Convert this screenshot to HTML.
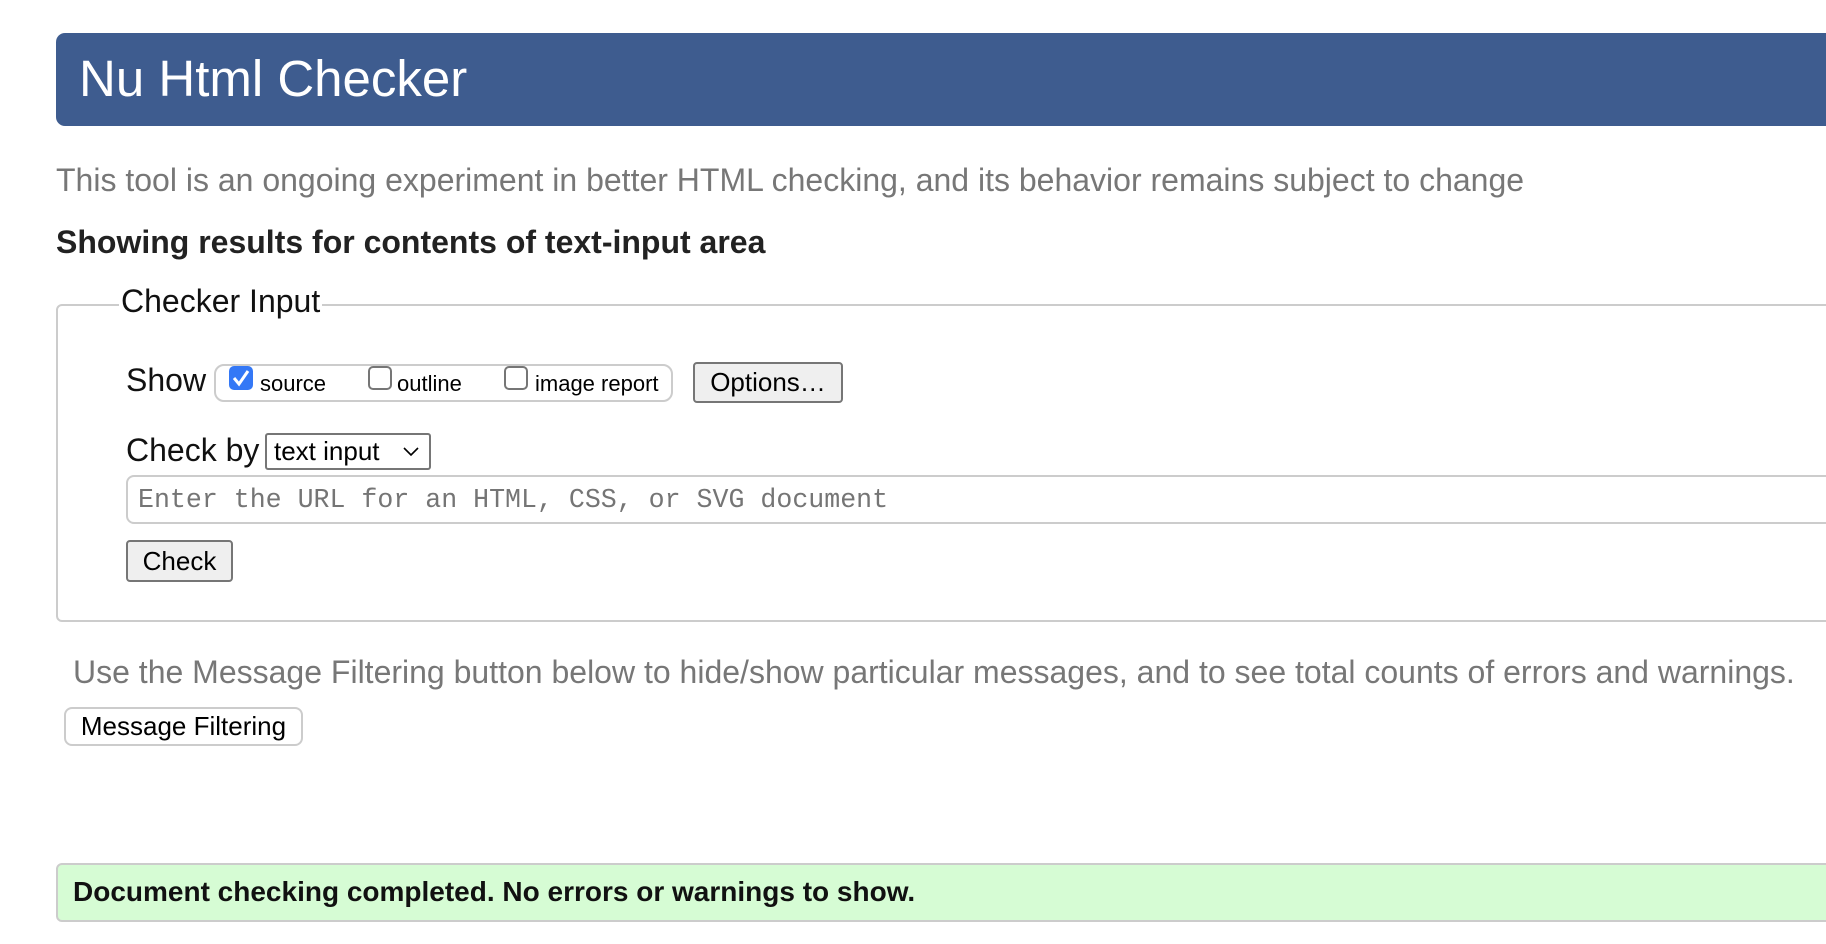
<!DOCTYPE html>
<html><head><meta charset="utf-8"><style>
body{margin:0;width:1826px;height:944px;overflow:hidden;background:#fff;font-family:"Liberation Sans",Arial,sans-serif;position:relative}
.a{position:absolute;white-space:nowrap}
#hdr{left:56px;top:33px;width:1800px;height:93px;background:#3e5c8f;border-radius:9px 0 0 9px}
#hdr span{position:absolute;left:23px;top:17px;color:#fff;font-size:51px;line-height:58px}
.gray{color:#777}
.box{border:2px solid #ccc;box-sizing:border-box}
.btn{background:#efefef;border:2px solid #767676;border-radius:4px;box-sizing:border-box;font-size:26px;color:#000;text-align:center}
.cb{display:inline-block;width:24px;height:24px;border:2px solid #767676;border-radius:5px;box-sizing:border-box;vertical-align:top}
</style></head><body>
<div class="a" id="hdr"><span>Nu Html Checker</span></div>
<div class="a gray" style="left:56px;top:162px;font-size:32px">This tool is an ongoing experiment in better HTML checking, and its behavior remains subject to change</div>
<div class="a" style="left:56px;top:224px;font-size:32px;font-weight:bold;color:#222">Showing results for contents of text-input area</div>
<div class="a box" style="left:56px;top:304px;width:1800px;height:318px;border-radius:6px 0 0 6px"></div>
<div class="a" style="left:119px;top:283px;font-size:32px;background:#fff;padding:0 2px;color:#111">Checker Input</div>
<div class="a" style="left:126px;top:362px;font-size:32px;color:#111">Show</div>
<div class="a box" style="left:214px;top:364px;width:459px;height:38px;border-radius:10px"></div>
<div class="a" style="left:229px;top:366px;width:24px;height:24px;background:#3478f6;border-radius:5px"><svg width="24" height="24"><path d="M5 12 L10 18 L19 5" stroke="#fff" stroke-width="3" fill="none"/></svg></div>
<div class="a" style="left:260px;top:371px;font-size:22px">source</div>
<div class="a cb" style="left:368px;top:366px"></div>
<div class="a" style="left:397px;top:371px;font-size:22px">outline</div>
<div class="a cb" style="left:504px;top:366px"></div>
<div class="a" style="left:535px;top:371px;font-size:22px">image report</div>
<div class="a btn" style="left:693px;top:362px;width:150px;height:41px;line-height:37px">Options…</div>
<div class="a" style="left:126px;top:432px;font-size:32px;color:#111">Check by</div>
<div class="a" style="left:265px;top:433px;width:166px;height:37px;border:2px solid #767676;border-radius:3px;box-sizing:border-box;font-size:26px;line-height:33px;padding-left:7px">text input<svg style="position:absolute;right:10px;top:12px" width="16" height="10"><path d="M1 1 L8 8 L15 1" stroke="#000" stroke-width="1.6" fill="none"/></svg></div>
<div class="a box" style="left:126px;top:475px;width:1720px;height:49px;border-radius:8px 0 0 8px"></div>
<div class="a" style="left:138px;top:485px;font-family:'Liberation Mono',monospace;font-size:26.6px;color:#757575">Enter the URL for an HTML, CSS, or SVG document</div>
<div class="a btn" style="left:126px;top:540px;width:107px;height:42px;line-height:38px">Check</div>
<div class="a gray" style="left:73px;top:654px;font-size:32px">Use the Message Filtering button below to hide/show particular messages, and to see total counts of errors and warnings.</div>
<div class="a" style="left:64px;top:707px;width:239px;height:39px;border:2px solid #ccc;border-radius:8px;box-sizing:border-box;font-size:26px;line-height:35px;text-align:center;background:#fff">Message Filtering</div>
<div class="a box" style="left:56px;top:863px;width:1800px;height:59px;background:#d6fcd4;border-radius:6px 0 0 6px"></div>
<div class="a" style="left:73px;top:876px;font-size:28px;font-weight:bold;color:#111">Document checking completed. No errors or warnings to show.</div>
</body></html>
